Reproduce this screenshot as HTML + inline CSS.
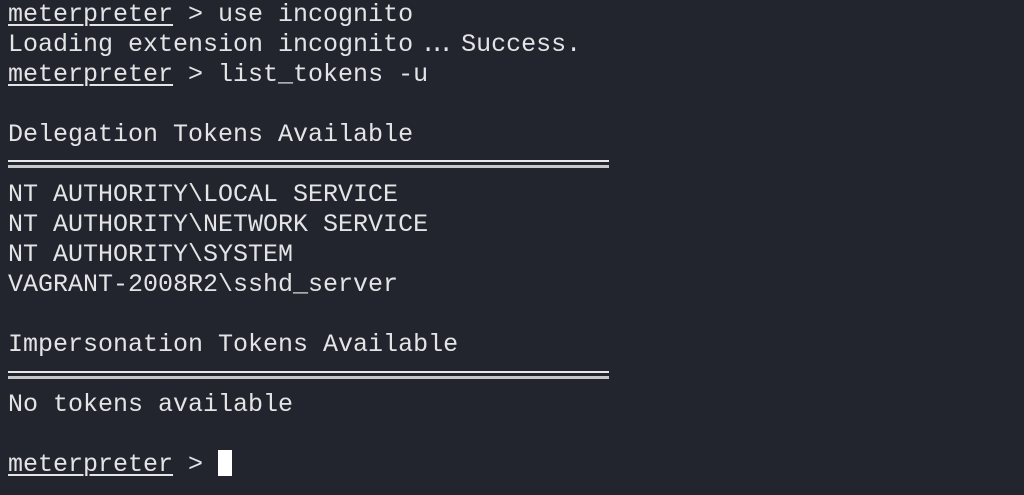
<!DOCTYPE html>
<html><head><style>
html,body{margin:0;padding:0;background:#22252e;width:1024px;height:495px;overflow:hidden}
pre{position:absolute;left:8px;top:0px;margin:0;font-family:"Liberation Mono","DejaVu Sans Mono",monospace;font-size:25px;line-height:30px;color:#e4e4e6}
u{text-decoration:underline;text-underline-offset:3px;text-decoration-thickness:2px}
.dl{position:absolute;left:8px;width:601px;height:2px;background:#e8e8ea}
.cur{display:inline-block;width:14px;height:26px;background:#fff;vertical-align:-5px}
.el{display:inline-block;width:48px;text-align:center;letter-spacing:-6px;text-indent:-6px}
</style></head><body>
<pre><u>meterpreter</u> &gt; use incognito
Loading extension incognito<span class="el">...</span>Success.
<u>meterpreter</u> &gt; list_tokens -u

Delegation Tokens Available

NT AUTHORITY\LOCAL SERVICE
NT AUTHORITY\NETWORK SERVICE
NT AUTHORITY\SYSTEM
VAGRANT-2008R2\sshd_server

Impersonation Tokens Available

No tokens available

<u>meterpreter</u> &gt; <span class="cur"></span></pre>
<div class="dl" style="top:160px"></div><div class="dl" style="top:165px;height:3px;background:#c8c8cc"></div>
<div class="dl" style="top:371px"></div><div class="dl" style="top:376px;height:3px;background:#c8c8cc"></div>
</body></html>
